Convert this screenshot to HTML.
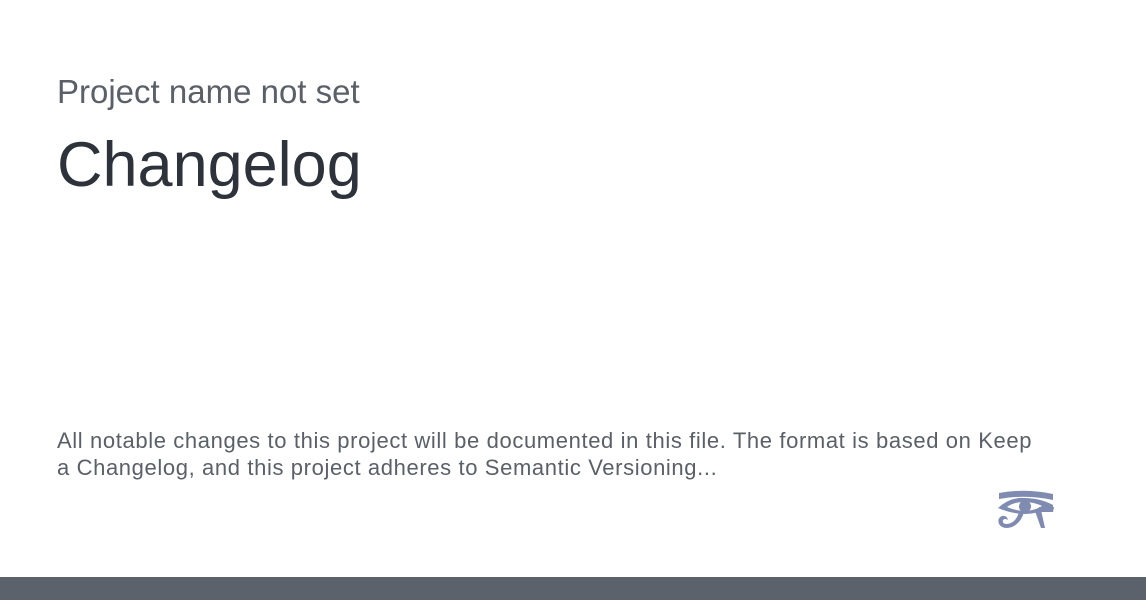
<!DOCTYPE html>
<html><head><style>
html,body{margin:0;padding:0;width:1146px;height:600px;background:#fff;overflow:hidden;font-family:"Liberation Sans",Arial,sans-serif;position:relative}
.p{position:absolute;left:57px;top:73px;font-size:33px;color:#5a5f68;white-space:nowrap}
.h{position:absolute;left:57px;top:129px;font-size:63px;color:#2d323b;white-space:nowrap}
.d{position:absolute;left:57px;top:427px;font-size:22px;letter-spacing:0.62px;line-height:27px;color:#5a5f68;white-space:nowrap}
.bar{position:absolute;left:0;top:577px;width:1146px;height:23px;background:#5b626c}
svg{position:absolute;left:996px;top:490px}
</style></head><body>
<div class="p">Project name not set</div>
<div class="h">Changelog</div>
<div class="d">All notable changes to this project will be documented in this file. The format is based on Keep<br>a Changelog, and this project adheres to Semantic Versioning...</div>
<svg width="60" height="42" viewBox="0 0 60 42">
<g fill="#7f8bb0" stroke="none">
<path d="M3 3 Q30 -2 57 4 L57 10 Q30 4 3 9 Z"/>
<path d="M2 18 Q14 7 28 8 Q44 8 57 15 L57 18 Q44 23 30 24 Q16 24 2 18 Z M11 17 Q20 21 30 21 Q40 20 46 16 Q38 12 28 12 Q18 12 11 17 Z"/>
<circle cx="29" cy="16.5" r="6"/>
<path d="M23 22 L28 22 Q25 33 16 37 Q7 40 3 34 Q1 28 6 26 Q11 25 12 30 Q9 28 7 30 Q6 34 11 34 Q20 33 23 22 Z"/>
<path d="M39 21 L45 20 L49 38 L45 38 Z"/>
<path d="M43 17 L58 17 L57 22 L43 22 Z"/>
</g></svg>
<div class="bar"></div>
</body></html>
